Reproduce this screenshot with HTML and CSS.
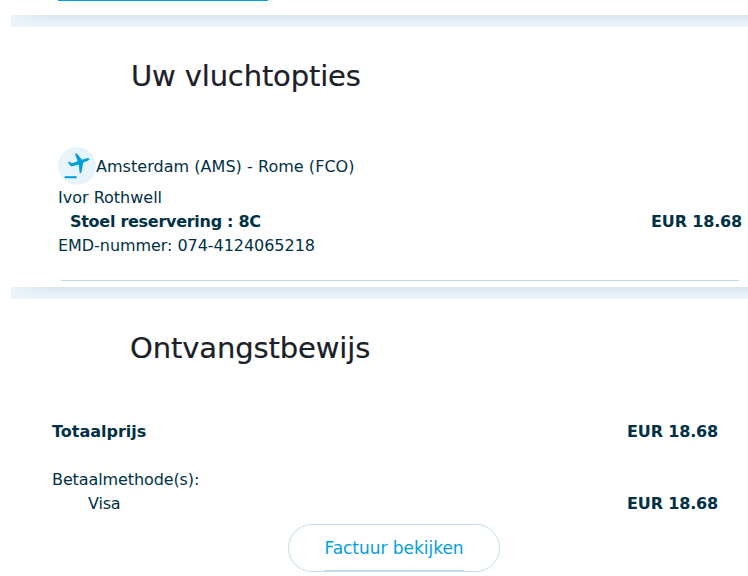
FILE: index.html
```html
<!DOCTYPE html>
<html lang="nl">
<head>
<meta charset="utf-8">
<title>Uw vluchtopties</title>
<link rel="stylesheet" href="styles.css">
</head>
<body>
<main class="page">
  <div class="previous"><div class="previous-line"></div></div>
  <div class="band"></div>
  <section class="options">
    <h1 class="heading heading-options">Uw vluchtopties</h1>
    <div class="flight">
      <svg class="flight-icon" viewBox="0 0 38 38" aria-hidden="true">
        <circle cx="19" cy="19" r="19" fill="#e8f4fb"/>
        <path d="M6.700 29.200h12v2h-12z" fill="#009fe0"/>
        <path d="M9.900 15.200L11.200 14.800L14 16.200L19.600 14.200L17 6.900L18.800 6.500L24 12.800L29.600 11.100C31.600 10.800 32 12.600 30.300 13.400L25.200 15.600L23.400 25.800L21.800 26.600L20.700 17.400L14.800 19.300C13.300 19.600 12.300 18.800 11.600 17.700Z" fill="#009fe0"/>
      </svg>
      <span class="route">Amsterdam (AMS) - Rome (FCO)</span>
    </div>
    <div class="passenger">Ivor Rothwell</div>
    <div class="row"><b class="seat">Stoel reservering : 8C</b><b class="price">EUR 18.68</b></div>
    <div class="emd">EMD-nummer: 074-4124065218</div>
    <div class="divider"></div>
  </section>
  <div class="band"></div>
  <section class="receipt">
    <h2 class="heading heading-receipt">Ontvangstbewijs</h2>
    <div class="row total"><b class="total-label">Totaalprijs</b><b class="price">EUR 18.68</b></div>
    <div class="methods">Betaalmethode(s):</div>
    <div class="row"><span class="visa">Visa</span><b class="price">EUR 18.68</b></div>
    <a class="invoice"><span class="invoice-label">Factuur bekijken</span></a>
  </section>
</main>
</body>
</html>
```
FILE: styles.css
```css
* { box-sizing: border-box; }
body {
  margin: 0;
  background: #fff;
  color: #003145;
  font: 16px/24px Verdana, "DejaVu Sans", sans-serif;
  white-space: nowrap;
}
.page { width: 748px; height: 576px; overflow: hidden; }
.previous { height: 15px; padding-left: 58px; }
.previous-line { width: 210px; height: 1px; background: #009fe0; }
.band {
  height: 12px;
  margin-left: 11px;
  background: linear-gradient(90deg, #eaf5fb 0, rgba(234, 245, 251, 0) 36px), linear-gradient(#dbe6ec, #e5eff5 50%, #ebf5fc);
}
.options { height: 260px; padding: 29px 6px 0 58px; }
.heading { margin: 0; font-size: 29px; line-height: 40px; font-weight: 400; color: #1b2028; -webkit-text-stroke: 0.2px; }
.heading-options { margin-left: 73px; letter-spacing: -0.15px; }
.flight { display: flex; align-items: center; height: 38px; margin-top: 51px; margin-bottom: 1px; }
.flight-icon { width: 38px; height: 38px; flex: none; }
.route { padding-top: 1px; letter-spacing: 0.04px; }
.row { display: flex; justify-content: space-between; }
.seat { padding-left: 12px; letter-spacing: -0.28px; }
.price { letter-spacing: -0.17px; }
.emd { letter-spacing: -0.05px; }
.divider { height: 1px; margin: 22px 3px 0; background: #bddceb; }
.receipt { padding: 29px 30px 0 52px; }
.heading-receipt { margin-left: 78px; letter-spacing: -0.12px; }
.total { margin-top: 52px; }
.methods { margin-top: 24px; letter-spacing: -0.1px; }
.visa { padding-left: 36px; letter-spacing: -0.2px; }
.invoice {
  display: flex;
  justify-content: center;
  width: 212px;
  height: 48px;
  margin: 8px 0 0 236px;
  border: 1px solid #c3deeb;
  border-radius: 24px;
  color: #009fe0;
}
.invoice-label { height: 46px; font-size: 17px; line-height: 46px; border-bottom: 1px solid #b9dae9; letter-spacing: -0.03px; }
```
